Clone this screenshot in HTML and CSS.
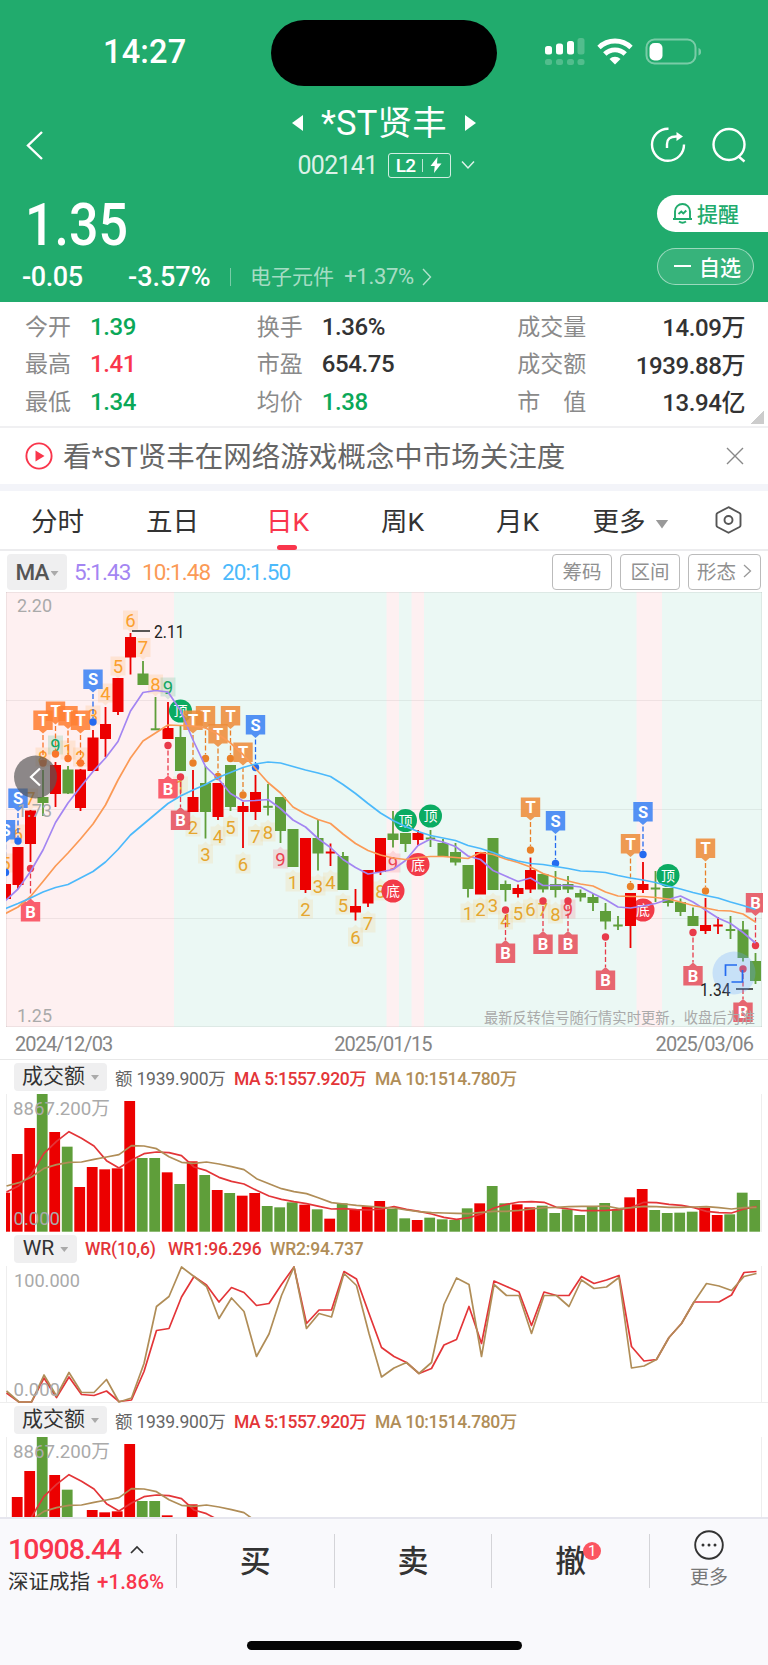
FILE: index.html
```html
<!DOCTYPE html>
<html lang="zh-CN">
<head>
    <meta charset="UTF-8">
    <meta name="viewport" content="width=device-width, initial-scale=1.0">
    <title>*ST贤丰 002141</title>
    <link rel="stylesheet" href="styles.css">
</head>
<body>
    <header class="header">
        <div class="status-bar">
            <span class="clock">14:27</span>
            <span class="island"></span>
            <svg class="status-icons" width="160" height="34" viewBox="0 0 160 34">
                <g fill="#fff">
                    <rect x="4" y="12" width="7" height="8.500" rx="2.500"/>
                    <rect x="15" y="9.500" width="7" height="11" rx="2.500"/>
                    <rect x="26" y="7" width="7" height="13.500" rx="2.500"/>
                    <g opacity=".22">
                        <rect x="36.500" y="4" width="7" height="16.500" rx="2.500"/>
                        <rect x="4" y="25" width="7" height="6" rx="2.500"/>
                        <rect x="15" y="25" width="7" height="6" rx="2.500"/>
                        <rect x="26" y="25" width="7" height="6" rx="2.500"/>
                        <rect x="36.500" y="25" width="7" height="6" rx="2.500"/>
                    </g>
                </g>
                <g fill="none" stroke="#fff" stroke-width="4.800">
                    <path d="M58 13.500a23 23 0 0 1 32 0"/>
                    <path d="M63.800 20a14.500 14.500 0 0 1 20.400 0"/>
                </g>
                <path d="M68.500 25a8 8 0 0 1 11 0L74 30.500z" fill="#fff"/>
                <rect x="105.500" y="5.500" width="49" height="24" rx="8" fill="none" stroke="#fff" stroke-width="2" opacity=".4"/>
                <rect x="108.500" y="9" width="13" height="17.500" rx="5" fill="#fff"/>
                <path d="M157.500 14c3.500 1 3.500 6.500 0 7.500z" fill="#fff" opacity=".4"/>
            </svg>
        </div>

        <div class="nav">
            <svg class="nav-back" width="20" height="32" viewBox="0 0 20 32"><path d="M18 2 4 15.500 18 29" fill="none" stroke="#fff" stroke-width="2.400"/></svg>
            <div class="nav-title">
                <div class="stock-name">
                    <svg width="11" height="16" viewBox="0 0 11 16"><path d="M11 0v16L0 8z" fill="#fff"/></svg>
                    <h1>*ST贤丰</h1>
                    <svg width="11" height="16" viewBox="0 0 11 16"><path d="M0 0v16l11-8z" fill="#fff"/></svg>
                </div>
                <div class="stock-code">
                    <span>002141</span>
                    <span class="level">L2<i></i><svg width="12" height="16" viewBox="0 0 12 16"><path d="M7.500 0 .5 9h4.200L4 16l7.500-9.500H7z" fill="#fff"/></svg></span>
                    <svg width="14" height="10" viewBox="0 0 14 10"><path d="m1 1.500 6 6.500 6-6.500" fill="none" stroke="#fff" stroke-width="1.500" opacity=".85"/></svg>
                </div>
            </div>
            <div class="nav-actions">
                <svg width="36" height="36" viewBox="0 0 36 36" fill="none" stroke="#fff" stroke-width="2.400">
                    <path d="M18.500 1.800A16 16 0 1 0 34 17.500"/>
                    <path d="M17 21v-4q0-7.500 9-7.500h4"/>
                    <path d="m26.500 5 6.500 4.500-6.500 4.500z" fill="#fff" stroke="none"/>
                </svg>
                <svg width="36" height="36" viewBox="0 0 36 36" fill="none" stroke="#fff" stroke-width="2.400">
                    <circle cx="18" cy="17.500" r="15.500"/>
                    <path d="m27 29 6.500 5.500"/>
                </svg>
            </div>
        </div>

        <div class="quote">
            <div class="quote-main">
                <div class="price">1.35</div>
                <div class="change">
                    <span class="diff">-0.05</span>
                    <span class="pct">-3.57%</span>
                    <span class="sector"><b>电子元件</b> +1.37%</span>
                    <svg width="10" height="18" viewBox="0 0 10 18"><path d="m1 1 7.500 8L1 17" fill="none" stroke="#fff" stroke-width="1.400" opacity=".65"/></svg>
                </div>
            </div>
            <div class="quote-side">
                <div class="pill pill-alert">
                    <svg width="21" height="22" viewBox="0 0 21 22" fill="none" stroke="#21ab6d" stroke-width="1.900">
                        <path d="M3 16.500V9.500a7.500 7.500 0 0 1 15 0v7M1 17h19M7 19.500q3.500 2.500 7 0"/>
                        <path d="m6.500 12 2.800-2.500 2 2 3-3"/>
                    </svg>
                    提醒
                </div>
                <div class="pill pill-watch"><i></i>自选</div>
            </div>
        </div>
    </header>

    <section class="stats">
        <dl>
            <dt>今开</dt><dd class="down">1.39</dd>
            <dt>最高</dt><dd class="up">1.41</dd>
            <dt>最低</dt><dd class="down">1.34</dd>
        </dl>
        <dl>
            <dt>换手</dt><dd>1.36%</dd>
            <dt>市盈</dt><dd>654.75</dd>
            <dt>均价</dt><dd class="down">1.38</dd>
        </dl>
        <dl class="wide">
            <dt>成交量</dt><dd>14.09万</dd>
            <dt>成交额</dt><dd>1939.88万</dd>
            <dt>市　值</dt><dd>13.94亿</dd>
        </dl>
    </section>

    <section class="banner">
        <svg width="28" height="28" viewBox="0 0 28 28"><circle cx="14" cy="14" r="12.600" fill="none" stroke="#f9364c" stroke-width="1.900"/><path d="M10.500 8.500v11l9-5.500z" fill="#f9364c"/></svg>
        <p>看*ST贤丰在网络游戏概念中市场关注度</p>
        <svg width="18" height="18" viewBox="0 0 18 18"><path d="m1 1 16 16M17 1 1 17" stroke="#888" stroke-width="1.400"/></svg>
    </section>

    <nav class="tabs">
        <span>分时</span>
        <span>五日</span>
        <span class="active">日K</span>
        <span>周K</span>
        <span>月K</span>
        <span>更多<i class="caret"></i></span>
        <svg width="27" height="28" viewBox="0 0 27 28" fill="none" stroke="#555" stroke-width="1.900"><path d="M13.500 1.200 24.500 7q1 .6 1 1.800v10.400q0 1.200-1 1.800l-11 5.800-11-5.800q-1-.6-1-1.800V8.800q0-1.200 1-1.800z"/><circle cx="13.500" cy="14" r="4"/></svg>
    </nav>

    <div class="ma-bar">
        <span class="chip">MA<i class="caret"></i></span>
        <span class="ma5">5:1.43</span>
        <span class="ma10">10:1.48</span>
        <span class="ma20">20:1.50</span>
        <span class="btn">筹码</span>
        <span class="btn">区间</span>
        <span class="btn btn-wide">形态<svg width="9" height="14" viewBox="0 0 9 14"><path d="m1 1 6.500 6L1 13" fill="none" stroke="#999" stroke-width="1.300"/></svg></span>
    </div>

    <main class="charts">
        <svg id="kline" class="kline" width="768" height="435" viewBox="0 592 768 435"></svg>
        <div class="dates"><span>2024/12/03</span><span>2025/01/15</span><span>2025/03/06</span></div>

        <div class="panel">
            <div class="panel-head">
                <span class="chip">成交额<i class="caret"></i></span>
                <span class="gray">额 1939.900万</span>
                <span class="red">MA 5:1557.920万</span>
                <span class="tan">MA 10:1514.780万</span>
            </div>
            <svg class="plot volume" width="768" height="138" viewBox="0 0 768 138"></svg>
        </div>
        <div class="panel panel-wr">
            <div class="panel-head">
                <span class="chip">WR<i class="caret"></i></span>
                <span class="red wr-name">WR(10,6)</span>
                <span class="red">WR1:96.296</span>
                <span class="tan">WR2:94.737</span>
            </div>
            <svg id="wr" class="plot" width="768" height="137" viewBox="0 1266 768 137"></svg>
        </div>
        <div class="panel">
            <div class="panel-head">
                <span class="chip">成交额<i class="caret"></i></span>
                <span class="gray">额 1939.900万</span>
                <span class="red">MA 5:1557.920万</span>
                <span class="tan">MA 10:1514.780万</span>
            </div>
            <svg class="plot volume" width="768" height="80" viewBox="0 0 768 80"></svg>
        </div>
    </main>

    <footer class="footer">
        <div class="trade-bar">
            <div class="index">
                <div class="index-value">10908.44<svg width="14" height="9" viewBox="0 0 14 9"><path d="m1 8 6-6 6 6" fill="none" stroke="#333" stroke-width="1.700"/></svg></div>
                <div class="index-name">深证成指 <span>+1.86%</span></div>
            </div>
            <div class="action">买</div>
            <div class="action">卖</div>
            <div class="action"><span class="cancel">撤<em>1</em></span></div>
            <div class="more">
                <svg width="30" height="30" viewBox="0 0 30 30"><circle cx="15" cy="15" r="13.800" fill="none" stroke="#333" stroke-width="1.900"/><g fill="#333"><circle cx="9" cy="15" r="1.500"/><circle cx="15" cy="15" r="1.500"/><circle cx="21" cy="15" r="1.500"/></g></svg>
                更多
            </div>
        </div>
        <div class="home-indicator"></div>
    </footer>

    <script src="chart.js"></script>
</body>
</html>
```

FILE: styles.css
```css
* {
    margin: 0;
    padding: 0;
    box-sizing: border-box;
}

body {
    width: 768px;
    height: 1665px;
    overflow: hidden;
    font-family: Roboto, "Noto Sans CJK SC", sans-serif;
    color: #333;
    background: #fff;
    display: flex;
    flex-direction: column;
}

svg {
    display: block;
    flex: none;
}

i, em {
    font-style: normal;
}

/* header */
.header {
    height: 302px;
    flex: none;
    background: #21ab6d;
    color: #fff;
}

.status-bar {
    height: 104px;
    padding-top: 20px;
    display: flex;
    align-items: flex-start;
}

.clock {
    width: 271px;
    padding-left: 103px;
    font-size: 32.5px;
    line-height: 65px;
    font-weight: 500;
    letter-spacing: 0.2px;
}

.island {
    width: 226px;
    height: 66px;
    border-radius: 33px;
    background: #000;
}

.status-icons {
    margin: 14px 0 0 44px;
}

.nav {
    height: 86px;
    padding: 0 21px 0 24px;
    display: flex;
    justify-content: space-between;
}

.nav-back {
    margin-top: 26px;
}

.nav-title {
    padding-left: 74px;
}

.stock-name {
    height: 38px;
    display: flex;
    align-items: center;
    justify-content: center;
    gap: 18px;
}

.stock-name h1 {
    font-size: 34.5px;
    font-weight: 400;
    line-height: 38px;
    letter-spacing: 0.2px;
}

.stock-code {
    height: 46px;
    padding-left: 4px;
    display: flex;
    align-items: center;
    justify-content: center;
    gap: 10px;
    font-size: 25px;
    letter-spacing: -0.7px;
    color: rgba(255, 255, 255, 0.85);
}

.level {
    width: 63px;
    height: 25px;
    border: 1.5px solid rgba(255, 255, 255, 0.8);
    border-radius: 3px;
    display: flex;
    align-items: center;
    justify-content: center;
    gap: 7px;
    font-size: 19px;
    font-weight: 500;
    color: #fff;
}

.level i {
    width: 1px;
    height: 13px;
    background: rgba(255, 255, 255, 0.7);
}

.nav-actions {
    display: flex;
    gap: 25px;
    padding-top: 23px;
}

.quote {
    height: 112px;
    display: flex;
    justify-content: space-between;
}

.price {
    height: 66px;
    padding-left: 25px;
    font-size: 59px;
    font-weight: 500;
    line-height: 69px;
    transform: scaleX(0.88);
    transform-origin: 25px 0;
}

.change {
    height: 40px;
    padding-left: 22px;
    padding-top: 2px;
    display: flex;
    align-items: center;
    font-size: 27px;
    font-weight: 500;
}

.diff {
    width: 106px;
    letter-spacing: -0.4px;
}

.pct {
    width: 102px;
    letter-spacing: 0;
}

.sector {
    padding-left: 19px;
    margin-right: 8px;
    border-left: 1px solid rgba(255, 255, 255, 0.4);
    font-size: 22px;
    line-height: 18px;
    font-weight: 400;
    color: rgba(255, 255, 255, 0.62);
    letter-spacing: -0.3px;
}

.sector b {
    font-weight: 400;
    font-size: 21px;
    letter-spacing: 0;
    margin-right: 5px;
}

.quote-side {
    width: 111px;
    padding-top: 5px;
}

.pill {
    height: 37px;
    padding-bottom: 2px;
    display: flex;
    align-items: center;
    font-size: 21px;
    font-weight: 500;
}

.pill-alert {
    padding-left: 15px;
    gap: 4px;
    background: #fff;
    color: #21ab6d;
    border-radius: 19px 0 0 19px;
}

.pill-watch {
    width: 97px;
    margin-top: 16px;
    padding-left: 16px;
    gap: 8px;
    border: 1px solid rgba(255, 255, 255, 0.5);
    border-radius: 19px;
    background: rgba(255, 255, 255, 0.1);
}

.pill-watch i {
    width: 17px;
    height: 2px;
    background: #fff;
}

/* stats */
.stats {
    height: 126px;
    flex: none;
    padding: 4px 23px 0 25px;
    border-bottom: 2px solid #f0f0f2;
    display: flex;
    background: linear-gradient(to bottom right, transparent 50%, #ccc 51%) no-repeat 750px 108px / 14px 14px;
}

.stats dl {
    width: 232px;
    display: grid;
    grid-template-columns: 65px 1fr;
    grid-auto-rows: 37.5px;
    align-items: center;
}

.stats .wide {
    width: 228px;
    margin-left: 29px;
    grid-template-columns: 70px 1fr;
}

.stats dt {
    font-size: 23px;
    color: #8a8a8a;
}

.stats dd {
    font-size: 24px;
    font-weight: 500;
    letter-spacing: -0.4px;
    padding-top: 4px;
}

.stats .wide dd {
    text-align: right;
    padding-top: 2px;
}

.up {
    color: #f9364c;
}

.down {
    color: #0aa858;
}

.banner {
    height: 63px;
    flex: none;
    padding: 0 24px 0 25px;
    border-bottom: 7px solid #f3f4f9;
    display: flex;
    align-items: center;
}

.banner p {
    flex: 1;
    margin-left: 10px;
    padding-top: 3px;
    font-size: 28.5px;
    line-height: 40px;
    color: #666;
}

/* period tabs */
.tabs {
    height: 60px;
    flex: none;
    border-bottom: 2px solid #ececee;
    padding-right: 26px;
    display: flex;
    align-items: center;
    font-size: 26.5px;
}

.tabs span {
    width: 115px;
    height: 58px;
    line-height: 61px;
    text-align: center;
    position: relative;
}

.tabs span:nth-child(6) {
    width: 111px;
}

.tabs .active {
    color: #f9364c;
}

.tabs .active::after {
    content: "";
    position: absolute;
    left: 47px;
    bottom: -1px;
    width: 20px;
    height: 5px;
    border-radius: 3px;
    background: #f9364c;
}

.caret {
    display: inline-block;
    width: 8px;
    height: 5px;
    margin-left: 6px;
    vertical-align: middle;
    background: #aaa;
    clip-path: polygon(0 0, 100% 0, 50% 100%);
}

.tabs .caret {
    width: 13px;
    height: 9px;
    margin-left: 10px;
    background: #999;
}

.tabs svg {
    margin-left: auto;
}

.ma-bar {
    height: 41px;
    flex: none;
    padding: 0 7px;
    display: flex;
    align-items: center;
    font-size: 22.5px;
    letter-spacing: -0.9px;
}

.chip {
    background: #efeff0;
    border-radius: 4px;
    text-align: center;
}

.ma-bar .chip {
    width: 60px;
    height: 36px;
    line-height: 36px;
    font-weight: 500;
    color: #555;
}

.ma-bar .caret {
    margin-left: 2px;
}

.ma5 {
    width: 68px;
    margin-left: 7px;
    color: #a385f2;
}

.ma10 {
    width: 80px;
    color: #fb9a56;
}

.ma20 {
    margin-right: auto;
    color: #4cb9fb;
}

.btn {
    width: 60px;
    height: 36px;
    margin-left: 8px;
    padding-bottom: 2px;
    border: 1.5px solid #bbb;
    border-radius: 4px;
    display: flex;
    align-items: center;
    justify-content: center;
    font-size: 19.5px;
    letter-spacing: 0;
    color: #909090;
}

.btn-wide {
    width: 73px;
    gap: 7px;
}

/* charts */
.charts {
    height: 925px;
    flex: none;
    overflow: hidden;
}

.charts text {
    font-family: Roboto, "Noto Sans CJK SC", sans-serif;
}

.dates {
    height: 33px;
    padding: 1px 15px 0;
    border-bottom: 1px solid #e8e8e8;
    display: flex;
    align-items: center;
    justify-content: space-between;
    font-size: 20px;
    letter-spacing: -0.9px;
    color: #858585;
}

.dates span:nth-child(2) {
    margin-right: 2px;
}

.panel-head {
    height: 34px;
    padding: 3px 14px;
    display: flex;
    align-items: center;
    font-size: 17.5px;
    letter-spacing: -0.4px;
    white-space: nowrap;
}

.panel-head .chip {
    width: 93px;
    height: 28px;
    margin-right: 8px;
    line-height: 27px;
    font-size: 21px;
    letter-spacing: 0;
}

.panel-head .gray {
    width: 119px;
    letter-spacing: -0.2px;
    color: #666;
}

.panel-head .red {
    width: 141px;
    color: #e33538;
    font-weight: 500;
}

.panel-head .tan {
    color: #b08d57;
    font-weight: 500;
}

.panel-wr {
    border-bottom: 1px solid #eee;
    height: 171px;
}

.panel-wr .panel-head {
    letter-spacing: -0.2px;
}

.panel-wr .panel-head .chip {
    width: 63px;
}

.panel-wr .panel-head .red {
    width: 102px;
}

.panel-wr .panel-head .wr-name {
    width: 83px;
}

/* bottom bar */
.footer {
    flex: 1;
    border-top: 2px solid #e6e6ee;
    background: #f9f9fc;
}

.trade-bar {
    height: 84px;
    display: flex;
    align-items: center;
}

.index {
    width: 176px;
    padding: 7px 0 0 8px;
}

.index-value {
    height: 34px;
    display: flex;
    align-items: center;
    gap: 9px;
    font-size: 28.5px;
    font-weight: 500;
    letter-spacing: -1px;
    color: #f9364c;
}

.index-name {
    height: 30px;
    line-height: 30px;
    font-size: 20.5px;
    white-space: nowrap;
}

.index-name span {
    margin-left: 2px;
    font-weight: 500;
    color: #f9364c;
}

.action {
    width: 157.7px;
    height: 54px;
    border-left: 1px solid #d4d4d8;
    line-height: 56px;
    text-align: center;
    font-size: 31px;
    font-weight: 500;
}

.cancel {
    position: relative;
}

.cancel em {
    position: absolute;
    top: -1px;
    right: -15px;
    width: 18px;
    height: 18px;
    border-radius: 50%;
    background: #fb5560;
    color: #fff;
    font-size: 15px;
    line-height: 18px;
    font-weight: 400;
}

.more {
    flex: 1;
    height: 54px;
    border-left: 1px solid #d4d4d8;
    display: flex;
    flex-direction: column;
    align-items: center;
    font-size: 19px;
    line-height: 36px;
    color: #777;
}

.more svg {
    margin-top: -4px;
}

.home-indicator {
    width: 275px;
    height: 9px;
    margin: 38px auto 0;
    border-radius: 5px;
    background: #050505;
}
```

FILE: chart.js
```javascript
const RED = '#ec0000';
const GREEN = '#5f9e3a';
const STEP = 12.5;
const barX = i => 5.5 + STEP * i;

// [color, high, body top, body bottom, low]
const candles = [
    ['r', 884, 884, 899, 899], ['r', 847, 847, 885, 889], ['r', 810, 810.5, 844, 862], ['g', 770, 797, 803, 816],
    ['r', 762, 765, 794, 807], ['g', 766, 769.5, 793.5, 794], ['r', 769, 769.5, 808, 811], ['r', 730, 737.5, 771, 771],
    ['r', 707, 724, 739, 757], ['r', 678, 678, 712, 715], ['r', 633, 637, 657.5, 674.5], ['g', 661, 673.5, 685, 685],
    ['g', 697, 728.3, 730.3, 730], ['r', 702, 728, 739, 739], ['g', 726, 737, 771, 771], ['r', 770, 797, 812, 812],
    ['g', 766, 783, 812, 838.5], ['r', 783, 783, 817, 820], ['g', 765, 765, 807, 811], ['r', 802, 806, 812, 848],
    ['r', 775, 792, 812, 820], ['g', 784, 805.8, 807.8, 815.5], ['g', 797, 797, 831, 843], ['g', 829, 829, 867, 867],
    ['r', 838, 838, 890, 893], ['g', 820, 838, 853.5, 870.5], ['r', 843.5, 851.5, 853.5, 866], ['g', 852, 856, 890, 890],
    ['r', 889, 906, 912.5, 920.5], ['r', 870, 870, 903.5, 907], ['r', 838, 838, 872, 875], ['g', 811, 833.5, 840, 847.5],
    ['g', 833, 833, 844, 852], ['r', 830, 833, 840, 845], ['g', 830, 837.5, 839.5, 847], ['g', 839, 843, 857, 857],
    ['g', 843, 852, 862.5, 865.5], ['g', 865, 865, 889, 897.5], ['r', 852, 852, 894.5, 894], ['g', 838, 838, 890, 890],
    ['g', 880.5, 884, 890, 901.5], ['r', 884.5, 888, 894, 897.5], ['r', 857.5, 870, 889.5, 893], ['g', 874, 874, 889.5, 892.5],
    ['g', 871, 884, 890, 897.5], ['g', 876, 884, 889.5, 893], ['g', 889.5, 893, 897.5, 901.5], ['g', 893, 897, 903, 911],
    ['g', 903, 911, 921.5, 929.5], ['g', 916, 924.5, 926.5, 930], ['r', 893, 893, 926, 948], ['r', 862, 884, 890, 893],
    ['g', 871, 887.5, 889.5, 902], ['g', 888, 888, 903, 906.5], ['g', 898.5, 902, 912, 916], ['g', 907.5, 916, 926, 926],
    ['r', 898, 925, 931, 934], ['r', 917, 924.5, 926.5, 934], ['g', 916, 929, 931, 939], ['g', 921, 929.5, 958, 961.5],
    ['g', 953, 961, 981, 984]
];

const ma5 = [900.5, 889, 871.5, 850, 822.5, 803, 787, 771.5, 758, 741.5, 711, 692.5, 690.5, 692, 710.5, 740, 766.5, 778.5, 793.5, 801,
    800.5, 799.5, 808.5, 820, 827, 838.5, 847.5, 859.5, 867.5, 874, 872, 869.5, 860.5, 845.5, 839, 842, 846.5, 856, 859.5, 870.5,
    876, 881.5, 878, 885.5, 885.5, 885.5, 887, 893.5, 899.5, 907, 908, 906, 903.5, 899.5, 896, 902, 910, 918, 923.5, 932.5, 943];
const ma10 = [913.5, 907, 896.5, 881.5, 866, 853, 839, 824, 805, 780, 758, 741, 733, 725, 725.5, 726, 728, 734, 743, 754.5,
    768.5, 782.5, 793, 807, 814, 819.5, 823.5, 834, 843.5, 850.5, 855, 858, 859.5, 857.5, 856.5, 856.5, 857.5, 858.5, 852.5, 854.5,
    859, 862.5, 867, 873.5, 877.5, 881, 884, 886, 892, 896, 896.5, 896.5, 897.5, 899, 902, 905.5, 908, 910.5, 911, 914, 922];
const ma20 = [908.5, 903.5, 898, 892, 887.5, 884.5, 878, 871.5, 862, 849.5, 835, 824.5, 814, 803.5, 796, 790, 784.5, 777.5, 772.5, 767.5,
    764, 762, 763, 766.5, 770, 773, 776.5, 784.5, 793.5, 803.5, 813, 820.5, 826.5, 831.5, 835.5, 838, 840.5, 845.5, 848.5, 852.5,
    857.5, 861, 863.5, 864.5, 866.5, 868.5, 871, 871.5, 872.5, 875.5, 878, 880, 882.5, 886, 889, 892.5, 895.5, 898, 902, 905.5, 909.5];

// nine-turn counts: [bar, digit, y, above/below]
const counts = [
    [0, 5, 863, 'a'], [1, 6, 834, 'a'], [2, 7, 798, 'a'], [3, 8, 757, 'a'], [4, 9, 745, 'a'], [5, 1, 750, 'a'], [6, 2, 757, 'a'],
    [7, 3, 715, 'a'], [8, 4, 693, 'a'], [9, 5, 666, 'a'], [10, 6, 620, 'a'], [11, 7, 647.5, 'a'], [12, 8, 684, 'a'], [13, 9, 687, 'a'],
    [14, 1, 786, 'b'], [15, 2, 827, 'b'], [16, 3, 854, 'b'], [17, 4, 836, 'b'], [18, 5, 827, 'b'], [19, 6, 864, 'b'], [20, 7, 836, 'b'],
    [21, 8, 832, 'b'], [22, 9, 859, 'b'], [23, 1, 882, 'b'], [24, 2, 909, 'b'], [25, 3, 886, 'b'], [26, 4, 882, 'b'], [27, 5, 905, 'b'],
    [28, 6, 937, 'b'], [29, 7, 923, 'b'], [30, 8, 891, 'b'], [31, 9, 863, 'b'], [37, 1, 913, 'b'], [38, 2, 909, 'b'], [39, 3, 905, 'b'],
    [40, 4, 920, 'b'], [41, 5, 913, 'b'], [42, 6, 909, 'b'], [43, 7, 909, 'b'], [44, 8, 914, 'b'], [45, 9, 909, 'b']
];

// [bar, letter, dot y, 'up' = flag above the dot]
const signals = [
    [0, 'S', 872.5, 'up'], [1, 'S', 841, 'up'], [2, 'B', 868.5], [4, 'T', 754, 'up'], [3, 'T', 763, 'up'], [5, 'T', 758.5, 'up'],
    [6, 'T', 763, 'up'], [7, 'S', 722, 'up'], [13, 'B', 745.5], [14, 'B', 777], [16, 'T', 758.5, 'up'], [15, 'T', 763, 'up'],
    [17, 'T', 776.5, 'up'], [18, 'T', 758.5, 'up'], [19, 'T', 795, 'up'], [20, 'S', 767.5, 'up'], [40, 'B', 910], [42, 'T', 850, 'up'],
    [44, 'S', 863.5, 'up'], [43, 'B', 901], [45, 'B', 901], [48, 'B', 937], [50, 'T', 886.5, 'up'], [51, 'S', 854.5, 'up'],
    [55, 'B', 932.5], [56, 'T', 891, 'up'], [59, 'B', 969], [60, 'B', 945.5, 'up']
];

const marks = [[14, '顶', 711], [32, '顶', 820.5], [34, '顶', 816], [53, '顶', 875.5], [31, '底', 891], [33, '底', 864.5], [51, '底', 910]];

function line(ys, color, dx = 0) {
    const pts = ys.map((y, i) => (barX(i) + dx) + ',' + y).join(' ');
    return `<polyline points="${pts}" fill="none" stroke="${color}" stroke-width="1.700" stroke-linejoin="round"/>`;
}

function label(x, y, text, size, length, color = '#aaa') {
    return `<text x="${x}" y="${y}" font-size="${size}" fill="${color}" textLength="${length}" lengthAdjust="spacingAndGlyphs">${text}</text>`;
}

function drawCount([i, n, y, side]) {
    const x = barX(i);
    const above = side === 'a';
    let color = above ? '#fb9f2c' : '#e5a62e';
    let bg = above ? '#ffb060' : '#f5cf80';
    if (n === 9) {
        color = above ? '#16a663' : '#ea4452';
        bg = above ? '#3fb283' : '#f56a78';
    }
    const tip = above ? `M${x - 3} ${y + 9.5}h6l-3 3z` : `M${x - 3} ${y - 9.5}h6l-3-3z`;
    return `<path d="M${x - 7.5} ${y - 9.5}h15v19h-15z${tip}" fill="${bg}" opacity=".2"/>
        <text x="${x}" y="${y + 6.7}" font-size="18.500" text-anchor="middle" fill="${color}">${n}</text>`;
}

function drawSignal([i, type, y, dir]) {
    const x = barX(i);
    const onPink = i < 14;
    const color = { S: '#3b82f4', T: onPink ? '#ff7f32' : '#ee8c3a', B: onPink ? '#f94858' : '#e6505c' }[type];
    const dot = { S: '#246bf0', T: onPink ? '#f9752b' : '#e98028', B: '#e83a4a' }[type];
    const top = dir ? y - 52.5 : y + 33.5;
    const tip = dir ? `M${x - 4} ${top + 19.5}h8l-4 3.5z` : `M${x - 4} ${top}h8l-4-3.5z`;
    const y1 = dir ? y - 28 : y + 5;
    const y2 = dir ? y - 4 : y + 30;
    return `<path d="M${x} ${y1}V${y2}" stroke="${dot}" stroke-width="1.300" stroke-dasharray="5 2.500"/>
        <circle cx="${x}" cy="${y}" r="3.700" fill="${dot}"/>
        <path d="M${x - 9.7} ${top}h19.4v19.500h-19.400z${tip}" fill="${color}" opacity=".87"/>
        <text x="${x}" y="${top + 15.5}" font-size="16.500" font-weight="700" text-anchor="middle" fill="#fff">${type}</text>`;
}

function drawKline() {
    let s = '<rect x="6" y="592" width="756" height="435" fill="#ebf8f4"/>';
    [[6, 168], [386.5, 12.5], [411.5, 12.5], [636.5, 25.5]].forEach(([x, w]) => {
        s += `<rect x="${x}" y="592" width="${w}" height="435" fill="#fef0f1"/>`;
    });
    s += '<path d="M6 592.500H762M6 700.500H762M6 809.500H762M6 918.500H762M6 1026.500H762M6.500 592V1027M761.500 592V1027" stroke="#000" stroke-opacity=".06" fill="none"/>';
    s += '<clipPath id="area"><rect x="6" y="592" width="757" height="435"/></clipPath><g clip-path="url(#area)">';
    s += counts.map(drawCount).join('');
    marks.forEach(([i, t, y]) => {
        s += `<circle cx="${barX(i)}" cy="${y}" r="11.500" fill="${t === '顶' ? '#0bab62' : '#f23a48'}"/>
            <text x="${barX(i)}" y="${y + 5}" font-size="14" text-anchor="middle" fill="#fff">${t}</text>`;
    });
    s += signals.map(drawSignal).join('');
    candles.forEach(([c, high, top, bottom, low], i) => {
        const color = c === 'r' ? RED : GREEN;
        const w = bottom - top < 3 ? 9.5 : 11;
        s += `<rect x="${barX(i) - 0.9}" y="${high}" width="1.800" height="${low - high}" fill="${color}"/>
            <rect x="${barX(i) - w / 2}" y="${top}" width="${w}" height="${bottom - top}" fill="${color}"/>`;
    });
    s += line(ma5, '#a385f2') + line(ma10, '#fb9a56') + line(ma20, '#4cb9fb');
    s += '</g>';

    s += label(17, 612, '2.20', 19, 35) + label(17, 816.5, '1.73', 19, 35) + label(17, 1022, '1.25', 19, 35);
    s += '<path d="M132 631h18M736 989h17" stroke="#222" stroke-width="1.600"/>';
    s += label(154, 638, '2.11', 18, 30.5, '#222') + label(700, 996, '1.34', 18, 30.5, '#222');
    s += label(484, 1023, '最新反转信号随行情实时更新，收盘后为准', 14.5, 271, '#aaa');

    // scroll-back and full screen buttons
    s += '<circle cx="35.500" cy="777" r="21.500" fill="#555" opacity=".68"/><path d="m40 768.500-9 8.500 9 8.500" fill="none" stroke="#fff" stroke-width="2.200"/>';
    s += '<circle cx="734" cy="973" r="21.500" fill="#6aa5ff" opacity=".28"/><path d="M725.500 976V965H737M731.500 982h11v-12" fill="none" stroke="#246bf0" stroke-width="1.700"/>';
    document.getElementById('kline').innerHTML = s;
}

// turnover bars, colour and level
const volume = 'r458 r342 r264 g162 r276 g320 r441 r381 r388 r385 r183 g354 g354 r397 g432 r364 g405 r450 g459 r467 r459 g498 g502 g487 r494 g508 r536 g490 r510 r499 r483 g507 g535 r540 g533 g538 g540 g505 r490 g438 g490 r493 r502 g497 g519 g508 g525 g500 g489 g508 r472 r447 g510 g519 g518 g515 r503 r525 g523 g458 g480'.split(' ');
const volMa5 = [456, 437, 402, 340, 304, 275, 295, 318, 362, 384, 360, 341, 336, 338, 347, 381, 392, 412, 424, 432, 451, 468, 478, 485, 491, 499, 507, 506, 509, 510,
    507, 500, 508, 514, 522, 532, 538, 533, 522, 504, 493, 486, 485, 487, 502, 507, 512, 512, 511, 509, 502, 487, 488, 493, 496, 503, 514, 518, 519, 507, 500];
const volMa10 = [438, 428, 411, 385, 374, 367, 366, 358, 351, 344, 317, 318, 326, 350, 367, 370, 366, 372, 380, 389, 416, 431, 446, 455, 461, 474, 488, 492, 496, 499,
    502, 504, 510, 515, 518, 519, 520, 521, 517, 514, 514, 511, 507, 503, 502, 500, 499, 499, 498, 506, 503, 499, 500, 502, 502, 501, 500, 503, 507, 503, 502];
const volY = v => v / 3 - 54;

function drawVolume(svg) {
    const full = svg.getAttribute('height') > 100;
    let s = '<path d="M6.500 0V138M761.500 0V138" stroke="#eee"/>';
    volume.forEach((v, i) => {
        const y = volY(+v.slice(1));
        const x = Math.max(barX(i) - 6.2, 6);
        s += `<rect x="${x}" y="${y}" width="${barX(i) + 4.6 - x}" height="${137.7 - y}" fill="${v[0] === 'r' ? RED : GREEN}"/>`;
    });
    s += line(volMa5.map(volY), '#e33538', 1) + line(volMa10.map(volY), '#b08d57', 1);
    s += label(13, 21, '8867.200万', 19, 97);
    if (full) s += label(13.5, 131, '0.000', 19, 46.5);
    svg.innerHTML = s;
}

const wr1 = [1393, 1402, 1402, 1378, 1397.5, 1377, 1394.5, 1395.5, 1391, 1401.5, 1400, 1371.5, 1330.5, 1328.5, 1297, 1276.5, 1285, 1302, 1287.5, 1292.5,
    1305.5, 1303.5, 1284.5, 1267, 1323.5, 1310, 1310, 1271.5, 1279, 1313.5, 1347.5, 1356.5, 1362.5, 1373.5, 1368.5, 1345, 1339.5, 1306.5, 1343.5, 1281,
    1286.5, 1292, 1325.5, 1292, 1295.5, 1295.5, 1276.5, 1283.5, 1280, 1275.5, 1346.5, 1361, 1359.5, 1337.5, 1323.5, 1302, 1302, 1302, 1295, 1272.5, 1271.5];
const wr2 = [1391, 1402, 1402, 1375, 1396, 1372.5, 1392.5, 1392.5, 1379.5, 1402, 1398, 1363.5, 1306.5, 1296.5, 1267, 1276.5, 1286.5, 1318.5, 1298, 1311.5,
    1356.5, 1334, 1295.5, 1267, 1328.5, 1313.5, 1317, 1273.5, 1285.5, 1333.5, 1377, 1368, 1362.5, 1373.5, 1362.5, 1304.5, 1278, 1284.5, 1356.5, 1284.5,
    1295.5, 1295.5, 1333.5, 1295.5, 1295.5, 1306.5, 1280, 1288.5, 1287, 1277.5, 1368, 1366, 1359.5, 1337.5, 1323.5, 1302, 1283.5, 1286, 1290.5, 1276.5, 1273.5];

function drawWr() {
    let s = '<path d="M6.500 1266V1403M761.500 1266V1403" stroke="#eee"/>';
    s += line(wr1, '#e33538', 1) + line(wr2, '#b08d57', 1);
    s += label(14, 1286.5, '100.000', 19, 66) + label(13.5, 1396, '0.000', 19, 46.5);
    document.getElementById('wr').innerHTML = s;
}

drawKline();
drawWr();
document.querySelectorAll('.volume').forEach(drawVolume);
```
